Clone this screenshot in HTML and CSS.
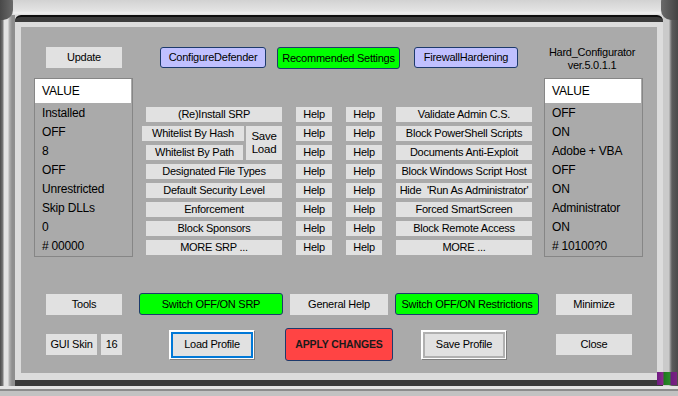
FILE: index.html
```html
<!DOCTYPE html>
<html lang="en">
  <head>
    <meta charset="UTF-8" />
    <meta name="viewport" content="width=device-width, initial-scale=1.0" />
    <title>Hard_Configurator</title>
    <link rel="stylesheet" href="styles.css">
  </head>
  <body>
    <div class="screen">
      <div class="window">
        <div class="bezel">
          <div class="panel">
            <!-- top buttons -->
            <div class="row-top">
              <button type="button" class="btn btn-update">Update</button>
              <button type="button" class="btn btn-blue btn-defender">ConfigureDefender</button>
              <button type="button" class="btn btn-green btn-recommended">Recommended Settings</button>
              <button type="button" class="btn btn-blue btn-firewall">FirewallHardening</button>
              <div class="title">Hard_Configurator<br>ver.5.0.1.1</div>
            </div>

            <!-- values + settings -->
            <div class="row-main">
              <ul class="listbox listbox-left">
                <li class="list-head">VALUE</li>
                <li>Installed</li>
                <li>OFF</li>
                <li>8</li>
                <li>OFF</li>
                <li>Unrestricted</li>
                <li>Skip DLLs</li>
                <li>0</li>
                <li># 00000</li>
              </ul>

              <div class="controls">
                <div class="col col-srp">
                  <button type="button" class="btn btn-small">(Re)Install SRP</button>
                  <div class="wl-group">
                    <div class="wl-stack">
                      <button type="button" class="btn btn-small btn-hash">Whitelist By Hash</button>
                      <button type="button" class="btn btn-small btn-path">Whitelist By Path</button>
                    </div>
                    <button type="button" class="btn btn-saveload">Save<br>Load</button>
                  </div>
                  <button type="button" class="btn btn-small">Designated File Types</button>
                  <button type="button" class="btn btn-small">Default Security Level</button>
                  <button type="button" class="btn btn-small">Enforcement</button>
                  <button type="button" class="btn btn-small">Block Sponsors</button>
                  <button type="button" class="btn btn-small">MORE SRP ...</button>
                </div>
                <div class="col col-help">
                  <button type="button" class="btn btn-small">Help</button>
                  <button type="button" class="btn btn-small">Help</button>
                  <button type="button" class="btn btn-small">Help</button>
                  <button type="button" class="btn btn-small">Help</button>
                  <button type="button" class="btn btn-small">Help</button>
                  <button type="button" class="btn btn-small">Help</button>
                  <button type="button" class="btn btn-small">Help</button>
                  <button type="button" class="btn btn-small">Help</button>
                </div>
                <div class="col col-help">
                  <button type="button" class="btn btn-small">Help</button>
                  <button type="button" class="btn btn-small">Help</button>
                  <button type="button" class="btn btn-small">Help</button>
                  <button type="button" class="btn btn-small">Help</button>
                  <button type="button" class="btn btn-small">Help</button>
                  <button type="button" class="btn btn-small">Help</button>
                  <button type="button" class="btn btn-small">Help</button>
                  <button type="button" class="btn btn-small">Help</button>
                </div>
                <div class="col col-restr">
                  <button type="button" class="btn btn-small">Validate Admin C.S.</button>
                  <button type="button" class="btn btn-small">Block PowerShell Scripts</button>
                  <button type="button" class="btn btn-small">Documents Anti-Exploit</button>
                  <button type="button" class="btn btn-small">Block Windows Script Host</button>
                  <button type="button" class="btn btn-small">Hide &nbsp;'Run As Administrator'</button>
                  <button type="button" class="btn btn-small">Forced SmartScreen</button>
                  <button type="button" class="btn btn-small">Block Remote Access</button>
                  <button type="button" class="btn btn-small">MORE ...</button>
                </div>
              </div>

              <ul class="listbox listbox-right">
                <li class="list-head">VALUE</li>
                <li>OFF</li>
                <li>ON</li>
                <li>Adobe + VBA</li>
                <li>OFF</li>
                <li>ON</li>
                <li>Administrator</li>
                <li>ON</li>
                <li># 10100?0</li>
              </ul>
            </div>

            <!-- switches -->
            <div class="row-switch">
              <button type="button" class="btn btn-tools">Tools</button>
              <button type="button" class="btn btn-green btn-switch btn-switch-srp">Switch OFF/ON SRP</button>
              <button type="button" class="btn btn-genhelp">General Help</button>
              <button type="button" class="btn btn-green btn-switch btn-switch-restr">Switch OFF/ON Restrictions</button>
              <button type="button" class="btn btn-minimize">Minimize</button>
            </div>

            <!-- profile + apply -->
            <div class="row-bottom">
              <button type="button" class="btn btn-skin">GUI Skin</button>
              <button type="button" class="btn btn-skin-num">16</button>
              <button type="button" class="btn btn-profile btn-load"><span>Load Profile</span></button>
              <button type="button" class="btn btn-apply">APPLY CHANGES</button>
              <button type="button" class="btn btn-profile btn-save"><span>Save Profile</span></button>
              <button type="button" class="btn btn-close">Close</button>
            </div>
          </div>
        </div>
      </div>
      <div class="glitch"></div>
    </div>
  </body>
</html>
```

FILE: styles.css
```css
* {
  padding: 0;
  margin: 0;
  box-sizing: border-box;
}
ul,
li {
  list-style: none;
}
html,
body {
  width: 678px;
  height: 396px;
  overflow: hidden;
}
body {
  font-family: "Liberation Sans", Arial, sans-serif;
  color: #000;
  background: #d8d8d8;
}
button {
  border: none;
  padding: 0;
  margin: 0;
  font-family: inherit;
  color: #000;
  cursor: pointer;
}

/* outer skin */
.screen {
  position: relative;
  height: 396px;
  padding: 15px 0 0 15px;
  background:
    linear-gradient(to bottom, #d2d2d2, #e4e4e4 11px, #f0f0f0 13px, #dcdcdc 15px) top / 100% 15px no-repeat,
    linear-gradient(to bottom, #e4e4e4 0, #e4e4e4 3px, #8c8c8c 3px, #8c8c8c 5px, #c2c2c2 5px) bottom / 100% 10px no-repeat,
    linear-gradient(to right, #4a4a4a 0, #7c7c7c 3px, #e2e2e2 4px, #e2e2e2 8px, #b6b6b6 9px, #8e8e8e 12px, #8e8e8e 15px) left / 15px 100% no-repeat,
    linear-gradient(to right, #cacaca 0, #cacaca 6px, #9a9a9a 7px, #5c5c5c 9px, #4a4a4a 15px) right / 15px 100% no-repeat,
    #d8d8d8;
}
.screen::before,
.screen::after {
  content: "";
  position: absolute;
  top: -8px;
  width: 17px;
  height: 28px;
  background: linear-gradient(to right, #3e3e3e, #6a6a6a);
}
.screen::before {
  left: -4px;
  border-radius: 0 10px 10px 0;
}
.screen::after {
  right: -2px;
  width: 19px;
  border-radius: 10px 0 0 10px;
  background: linear-gradient(to right, #6a6a6a, #3e3e3e);
}
.window {
  position: relative;
  z-index: 1;
  width: 648px;
  padding-top: 5px;
  background: #3c3c3c;
  border-top: 2px solid #0e0e0e;
  border-bottom: 6px solid #3a3a3a;
  border-radius: 6px 6px 0 0;
}
.bezel {
  border: solid #dcdcdc;
  border-width: 5px 6px 7px 6px;
}
.panel {
  width: 636px;
  height: 346px;
  padding-top: 19px;
  background: #aaaaaa;
  display: flex;
  flex-direction: column;
}

/* buttons */
.btn {
  background: #e1e1e1;
  font-size: 11px;
  letter-spacing: -0.25px;
  line-height: 13px;
  text-align: center;
  flex-shrink: 0;
}
.btn-blue,
.btn-green,
.btn-apply {
  border: 1px solid #1d3a6c;
  border-radius: 3px;
}
.btn-blue {
  background: #c0c0ff;
}
.btn-green {
  background: #00ff00;
}

.row-top {
  display: flex;
  align-items: flex-start;
  height: 32px;
}
.btn-update {
  width: 76px;
  height: 21px;
  margin: 1px 0 0 25px;
}
.btn-defender {
  width: 106px;
  height: 21px;
  margin: 1px 0 0 38px;
}
.btn-recommended {
  width: 123px;
  height: 22px;
  margin: 1px 0 0 11px;
}
.btn-firewall {
  width: 104px;
  height: 21px;
  margin: 1px 0 0 14px;
}
.title {
  width: 100px;
  margin: 0 0 0 24px;
  font-size: 11px;
  letter-spacing: -0.25px;
  line-height: 13px;
  text-align: center;
}

/* lists */
.row-main {
  display: flex;
  height: 179px;
}
.listbox {
  width: 99px;
  height: 179px;
  border: 1px solid #868686;
  font-size: 12px;
  letter-spacing: -0.2px;
  line-height: 19px;
  flex-shrink: 0;
}
.listbox li {
  padding-left: 7px;
}
.listbox .list-head {
  width: 96px;
  height: 24px;
  line-height: 24px;
  background: #fff;
  margin-bottom: 1px;
}
.listbox-left {
  margin-left: 13px;
}
.listbox-right {
  margin-left: 12px;
}

.controls {
  display: flex;
  gap: 14px;
  width: 390px;
  margin-left: 9px;
  padding-top: 29px;
}
.col {
  display: flex;
  flex-direction: column;
  gap: 4px;
}
.btn-small {
  height: 15px;
}
.col-srp {
  width: 140px;
  align-items: flex-end;
}
.col-srp > .btn-small {
  width: 136px;
}
.wl-group {
  display: flex;
  gap: 2px;
  width: 140px;
}
.wl-stack {
  display: flex;
  flex-direction: column;
  gap: 4px;
  width: 102px;
}
.btn-hash {
  width: 102px;
}
.btn-path {
  width: 97px;
  margin-left: 4px;
}
.btn-saveload {
  width: 36px;
  height: 34px;
  font-size: 11.5px;
}
.col-help {
  width: 36px;
}
.col-restr {
  width: 136px;
}

/* bottom */
.row-switch {
  display: flex;
  align-items: center;
  height: 22px;
  margin-top: 36px;
}
.btn-tools {
  width: 76px;
  height: 21px;
  margin-left: 25px;
}
.btn-switch {
  width: 144px;
  height: 22px;
}
.btn-switch-srp {
  margin-left: 17px;
}
.btn-genhelp {
  width: 98px;
  height: 21px;
  margin-left: 7px;
}
.btn-switch-restr {
  margin-left: 7px;
}
.btn-minimize {
  width: 76px;
  height: 21px;
  margin-left: 17px;
}

.row-bottom {
  display: flex;
  align-items: center;
  height: 33px;
  margin-top: 13px;
}
.btn-skin {
  width: 51px;
  height: 21px;
  margin-left: 25px;
}
.btn-skin-num {
  width: 21px;
  height: 21px;
  margin-left: 4px;
}
.btn-profile {
  width: 86px;
  height: 30px;
  background: #fdfdfd;
  border: 1px solid;
  border-color: #ffffff #7e7e7e #7e7e7e #ffffff;
  padding: 1px;
}
.btn-profile span {
  display: flex;
  align-items: center;
  justify-content: center;
  height: 100%;
  background: #e1e1e1;
  border: 2px solid #0078d7;
}
.btn-save span {
  border-color: #b0b0b0;
}
.btn-load {
  margin-left: 47px;
}
.btn-apply {
  width: 108px;
  height: 33px;
  margin-left: 30px;
  background: #ff4444;
  font-size: 10.5px;
  font-weight: bold;
  letter-spacing: -0.15px;
  color: #1a1a1a;
}
.btn-save {
  margin-left: 28px;
}
.btn-close {
  width: 76px;
  height: 21px;
  margin-left: 49px;
}

.glitch {
  position: absolute;
  right: 1px;
  bottom: 11px;
  z-index: 2;
  width: 20px;
  height: 13px;
  background: linear-gradient(to right, #6e1a82 0, #8a2a8c 6px, #1e7a1e 7px, #2a8a2a 13px, #6e1a82 14px, #7a247e 20px);
}
```
